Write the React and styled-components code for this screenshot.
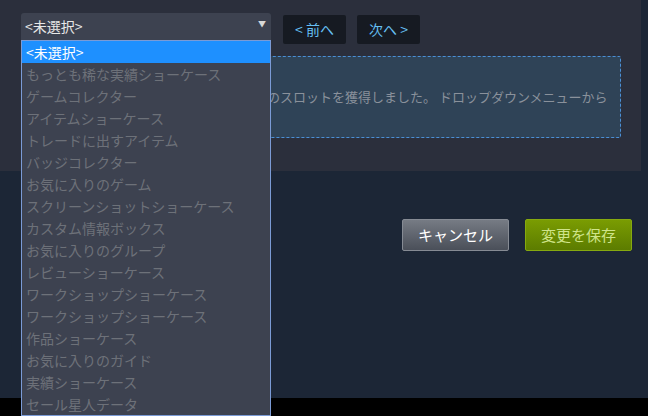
import React from "react";
import styled, { createGlobalStyle } from "styled-components";

const Global = createGlobalStyle`
  html, body { margin: 0; padding: 0; background: #000; }
  body { font-family: "Noto Sans CJK JP", "Noto Sans", sans-serif; }
  * { box-sizing: border-box; }
`;

const Page = styled.div`
  position: relative;
  width: 648px;
  height: 416px;
  display: grid;
  grid-template-rows: 398px 18px;
  background: #000;
`;

const Main = styled.div`
  background: #1c2636;
`;

const BottomStrip = styled.div`
  background: #000;
`;

const Panel = styled.div`
  width: 641px;
  background: #2b2f3c;
  padding: 13px 20px 33px 21px;
`;

const Toolbar = styled.div`
  display: flex;
  align-items: flex-start;
  gap: 11px;
`;

const SelectBox = styled.div`
  width: 250px;
  height: 27px;
  background: #3d4250;
  border-radius: 3px 3px 0 0;
  color: #e8e8e8;
  font-size: 14px;
  line-height: 27px;
  padding: 0 5px 0 4px;
  display: flex;
  align-items: center;
  justify-content: space-between;
`;

const Arrow = styled.span`
  font-size: 8px;
  color: #d8d8d8;
  margin-top: -6px;
`;

const NavButton = styled.button`
  margin-top: 2px;
  margin-left: ${(p) => (p.$first ? "1px" : "0")};
  width: 63px;
  height: 29px;
  border: none;
  border-radius: 2px;
  background: #161a22;
  color: #66c0f4;
  font-family: inherit;
  font-size: 14px;
  line-height: 29px;
  padding: 0;
`;

const Notice = styled.div`
  margin-top: 12px;
  background: #2f4357;
  border: 1px dashed #4b8fd6;
  border-radius: 2px;
  padding: 30px 10px 30px 12px;
  color: #8a919b;
  font-size: 13px;
  line-height: 20px;
  white-space: nowrap;
  overflow: hidden;
`;

const Footer = styled.div`
  display: flex;
  justify-content: flex-end;
  gap: 16px;
  padding: 48px 16px 0 0;
`;

const ActionButton = styled.button`
  width: 107px;
  height: 32px;
  border-radius: 2px;
  font-family: inherit;
  font-size: 15px;
  line-height: 30px;
  padding: 0;
  border: 1px solid ${(p) => (p.$primary ? "#86a90f" : "#868b94")};
  background: ${(p) =>
    p.$primary
      ? "linear-gradient(to bottom, #7a9c02 0%, #5c7c00 100%)"
      : "linear-gradient(to bottom, #767b84 0%, #4a4f59 100%)"};
  color: ${(p) => (p.$primary ? "#cfe48a" : "#ffffff")};
`;

const List = styled.ul`
  position: absolute;
  left: 21px;
  top: 40px;
  width: 250px;
  margin: 0;
  padding: 0;
  list-style: none;
  background: #3d4250;
  border: 1px solid #7b9bd6;
  z-index: 10;
`;

const Option = styled.li`
  height: 22px;
  line-height: 22px;
  font-size: 14px;
  padding-left: 4px;
  white-space: nowrap;
  overflow: hidden;
  background: ${(p) => (p.$selected ? "#1e90ff" : "transparent")};
  color: ${(p) => (p.$selected ? "#ffffff" : "#6d7179")};
`;

const options = [
  "<未選択>",
  "もっとも稀な実績ショーケース",
  "ゲームコレクター",
  "アイテムショーケース",
  "トレードに出すアイテム",
  "バッジコレクター",
  "お気に入りのゲーム",
  "スクリーンショットショーケース",
  "カスタム情報ボックス",
  "お気に入りのグループ",
  "レビューショーケース",
  "ワークショップショーケース",
  "ワークショップショーケース",
  "作品ショーケース",
  "お気に入りのガイド",
  "実績ショーケース",
  "セール星人データ",
];

export default function App() {
  return (
    <>
      <Global />
      <Page>
        <Main>
          <Panel>
            <Toolbar>
              <SelectBox>
                <span>&lt;未選択&gt;</span>
                <Arrow>▼</Arrow>
              </SelectBox>
              <NavButton $first>&lt; 前へ</NavButton>
              <NavButton>次へ &gt;</NavButton>
            </Toolbar>
            <Notice>
              レベルアップにより新しいショーケースのスロットを獲得しました。 ドロップダウンメニューから
            </Notice>
          </Panel>
          <Footer>
            <ActionButton>キャンセル</ActionButton>
            <ActionButton $primary>変更を保存</ActionButton>
          </Footer>
        </Main>
        <BottomStrip />
        <List>
          {options.map((o, i) => (
            <Option key={i} $selected={i === 0}>
              {o}
            </Option>
          ))}
        </List>
      </Page>
    </>
  );
}
